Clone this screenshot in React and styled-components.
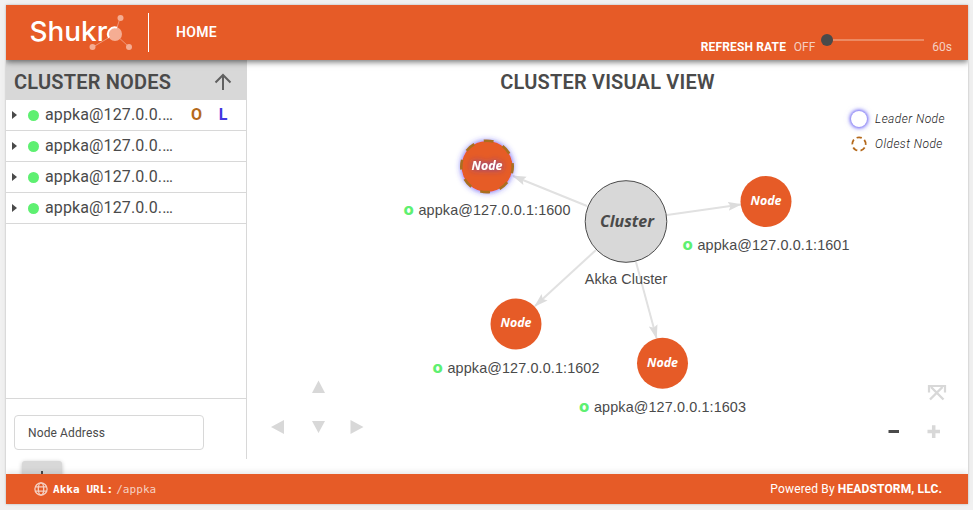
import React from "react";
import styled, { createGlobalStyle } from "styled-components";

const C = { orange: "#e65b27", dark: "#4a4a4a", light: "#d8d8d8", green: "#5ef071", brown: "#b4691b", blue: "#4338e0" };

const Global = createGlobalStyle`
  * { box-sizing: border-box; }
  body { margin: 0; background: #f1f1f1; font-family: Roboto, sans-serif; color: ${C.dark}; overflow: hidden; }
`;
const Page = styled.div`height: 510px; padding: 5px 5px 6px 6px;`;
const Shell = styled.div`
  height: 499px; display: flex; flex-direction: column; background: #fff;
  box-shadow: 0 0 2px rgba(0,0,0,.25), 0 0 8px rgba(0,0,0,.04); overflow: hidden;
`;
const Header = styled.header`
  height: 55px; flex: none; display: flex; align-items: flex-start; background: ${C.orange};
  color: #fff; position: relative; z-index: 1; box-shadow: 0 2px 6px rgba(0,0,0,.55);
`;
const Logo = styled.svg`width: 112px; height: 46px; margin: 5px 0 0 19px; display: block;`;
const Divider = styled.div`width: 1px; height: 39px; margin: 8px 0 0 11px; background: #fff;`;
const NavLink = styled.a`margin: 19px 0 0 27px; font-size: 14px; line-height: 16px; font-weight: 600; letter-spacing: .3px;`;
const Refresh = styled.div`margin: 27px 16px 0 auto; display: flex; font-size: 12px; line-height: 30px;`;
const RefreshTitle = styled.strong`font-weight: 700; width: 93px; letter-spacing: .15px;`;
const Faded = styled.span`color: #f5d0c2;`;
const Slider = styled.div`
  width: 104px; height: 12px; margin: 2px 7px 0 6px; display: flex; align-items: center;
`;
const Thumb = styled.div`width: 12px; height: 12px; border-radius: 50%; background: ${C.dark};`;
const Track = styled.div`flex: 1; height: 2px; background: #ec8a63; margin-right: 1px;`;

const Main = styled.main`height: 414px; flex: none; display: flex;`;
const Sidebar = styled.aside`
  width: 241px; height: 399px; border-right: 1px solid ${C.light}; display: flex; flex-direction: column;
`;
const SideTitle = styled.div`
  height: 40px; flex: none; background: ${C.light}; display: flex; align-items: center;
  justify-content: space-between; padding: 4px 14px 0 8px; font-size: 20px; font-weight: 600; letter-spacing: .2px;
`;
const NodeList = styled.div`height: 298px; flex: none;`;
const Row = styled.div`
  height: 31px; border-bottom: 1px solid ${C.light}; display: flex; align-items: center; font-size: 16px;
  padding: 0 0 1px 6px;
`;
const Caret = styled.div`
  border-left: 5px solid ${C.dark}; border-top: 4px solid transparent; border-bottom: 4px solid transparent;
`;
const Dot = styled.div`width: 11px; height: 11px; border-radius: 50%; background: ${C.green}; margin: 1px 6.5px 0 10.5px;`;
const Address = styled.span`
  width: 131px; flex: none; overflow: hidden; white-space: nowrap; text-overflow: ellipsis; letter-spacing: .12px;
`;
const Flag = styled.b`width: 12px; margin-left: 14.5px; text-align: center; color: ${(p) => p.$color}; font-weight: 700;`;
const AddForm = styled.form`border-top: 1px solid ${C.light}; height: 76px; flex: none; padding: 16px 8px 0;`;
const Input = styled.input`
  width: 190px; height: 35px; border: 1px solid ${C.light}; border-radius: 4px; padding: 0 13px; display: block;
  font: 12px Roboto, sans-serif; letter-spacing: .12px; &::placeholder { color: ${C.dark}; opacity: 1; }
`;
const AddButton = styled.button`
  margin: 11px 0 0 8px; width: 40px; height: 36px; border: 0; border-radius: 3px; padding: 0;
  background: ${C.light}; box-shadow: 0 1px 4px rgba(0,0,0,.25); display: flex; justify-content: center; padding-top: 10px;
`;
const AddIcon = styled.svg`width: 14px; height: 14px;`;

const View = styled.section`flex: 1; position: relative;`;
const ViewTitle = styled.h1`
  margin: 10px 0 0; text-align: center; font-size: 20px; line-height: 24px; font-weight: 600; letter-spacing: .2px;
`;
const Graph = styled.svg`position: absolute; left: 0; top: 0; width: 721px; height: 414px;`;
const Legend = styled.div`
  position: absolute; right: 23px; top: 46px; font-size: 12px; font-style: italic; font-weight: 300;
  letter-spacing: .45px; color: #222;
`;
const LegendItem = styled.div`height: 25px; display: flex; align-items: center; gap: 5px;`;
const LegendIcon = styled.svg`width: 22px; height: 22px; overflow: visible;`;
const LeaderRing = styled.circle`filter: drop-shadow(0 0 2px #4a40f0) drop-shadow(0 0 2px rgba(74,64,240,.5));`;

const Footer = styled.footer`
  height: 30px; flex: none; background: ${C.orange}; color: #fff; display: flex; align-items: center;
  padding: 0 26px 0 28px; font-size: 12px; position: relative; z-index: 1; box-shadow: 0 -2px 6px rgba(0,0,0,.1);
`;
const Globe = styled.svg`width: 14px; height: 14px; margin-right: 5px;`;
const Url = styled.div`flex: 1; font: 11px "DejaVu Sans Mono", monospace; display: flex; gap: 3px; letter-spacing: .06px;`;
const Credit = styled.span`letter-spacing: .14px;`;

const EDGES = [
  { x1: 340, y1: 146, x2: 266, y2: 116 },
  { x1: 420, y1: 155, x2: 494, y2: 144.5 },
  { x1: 349, y1: 190, x2: 288, y2: 246 },
  { x1: 389, y1: 202, x2: 409.5, y2: 278 },
];
const NODES = [
  { x: 240, y: 106.4, port: 1600, leader: true },
  { x: 519, y: 141.5, port: 1601 },
  { x: 269, y: 264, port: 1602 },
  { x: 415.5, y: 303.3, port: 1603 },
];

function ShukraLogo() {
  return (
    <Logo viewBox="25 10 112 46">
      <text x="29.5" y="41" fill="#fff" fontFamily="Inter, sans-serif" fontWeight="500" fontSize="27" textLength="78" lengthAdjust="spacingAndGlyphs">Shukr</text>
      <path d="M115 34L120 18M115 34L93 47M115 34L129 47" stroke="#f0977a" strokeWidth="1" />
      <g fill="#f5ad93">
        <circle cx="115" cy="34" r="7" /><circle cx="120.5" cy="18" r="3" />
        <circle cx="92.5" cy="47" r="3" /><circle cx="129" cy="47" r="3" />
      </g>
      <path d="M117 27.6a6.8 6.8 0 0 0-8 10" fill="none" stroke="#fff" strokeWidth="2" />
    </Logo>
  );
}

function ClusterGraph() {
  return (
    <Graph viewBox="0 0 721 414">
      <defs>
        <marker id="tip" markerUnits="userSpaceOnUse" markerWidth="15" markerHeight="10" refX="13" refY="4.5" orient="auto">
          <path d="M0 0L14 4.5L0 9L2.5 4.5Z" fill="#dcdcdc" />
        </marker>
        <filter id="glow" x="-50%" y="-50%" width="200%" height="200%">
          <feDropShadow dx="0" dy="0" stdDeviation="3.2" floodColor="#3a30f0" floodOpacity=".85" />
        </filter>
      </defs>
      {EDGES.map((e) => <line key={e.x2} {...e} stroke="#e1e1e1" strokeWidth="2" markerEnd="url(#tip)" />)}
      <circle cx="379" cy="161.5" r="40.8" fill={C.light} stroke={C.dark} />
      <text x="380" y="166.5" textAnchor="middle" fontFamily="Open Sans, sans-serif" fontStyle="italic" fontWeight="700" fontSize="16" textLength="54" lengthAdjust="spacingAndGlyphs" fill={C.dark}>Cluster</text>
      <text x="379" y="224" textAnchor="middle" fontFamily="Liberation Sans, sans-serif" fontSize="14.4" textLength="82.5" fill={C.dark}>Akka Cluster</text>
      {NODES.map((n) => (
        <g key={n.port}>
          <circle cx={n.x} cy={n.y} r="25.5" fill={C.orange} filter={n.leader ? "url(#glow)" : undefined} />
          {n.leader && <circle cx={n.x} cy={n.y} r="25.7" fill="none" stroke="#a96f20" strokeWidth="2.6" strokeDasharray="10 10" strokeDashoffset="3" />}
          <text x={n.x} y={n.y + 3.4} textAnchor="middle" fontFamily="Open Sans, sans-serif" fontStyle="italic" fontWeight="700" fontSize="12" textLength="31" lengthAdjust="spacingAndGlyphs" fill="#fff" filter={n.leader ? "url(#glow)" : undefined}>Node</text>
          <text x={n.x - 83.5} y={n.y + 48.7} fontFamily="DejaVu Sans, sans-serif" fontWeight="700" fontSize="15" fill={C.green}>o</text>
          <text x={n.x - 68.5} y={n.y + 48.5} fontFamily="Liberation Sans, sans-serif" fontSize="14.4" textLength="152" fill={C.dark}>{`appka@127.0.0.1:${n.port}`}</text>
        </g>
      ))}
      <path d="M71.5 320.5L78 333H65ZM71.5 373L65 361H78ZM24 367L37 360V374ZM116.5 367L103.5 360V374Z" fill={C.light} />
      <g fill="none" stroke={C.light} strokeWidth="2.4">
        <path d="M683 339.5L695.5 327M696.5 339.5L684 327" />
        <path d="M682 332.5V326H688M698 332.5V326H692M687 326H693" strokeWidth="2.2" />
        <path d="M680.5 371.5H693M686.7 365.2V378" strokeWidth="3.5" />
        <path d="M641.5 371.5H652" stroke={C.dark} strokeWidth="3" />
      </g>
    </Graph>
  );
}

export default function App() {
  return (
    <Page>
      <Global />
      <Shell>
        <Header>
          <ShukraLogo />
          <Divider />
          <NavLink>HOME</NavLink>
          <Refresh>
            <RefreshTitle>REFRESH RATE</RefreshTitle>
            <Faded>OFF</Faded>
            <Slider><Thumb /><Track /></Slider>
            <Faded>60s</Faded>
          </Refresh>
        </Header>
        <Main>
          <Sidebar>
            <SideTitle>
              CLUSTER NODES
              <svg width="18" height="18" viewBox="0 0 18 18" fill="none" stroke="#606060" strokeWidth="2"><path d="M9 17V2M1.5 9.5L9 2L16.5 9.5" /></svg>
            </SideTitle>
            <NodeList>
              {NODES.map((n) => (
                <Row key={n.port}>
                  <Caret /><Dot />
                  <Address>{`appka@127.0.0.1:${n.port}`}</Address>
                  {n.leader && <><Flag $color={C.brown}>O</Flag><Flag $color={C.blue}>L</Flag></>}
                </Row>
              ))}
            </NodeList>
            <AddForm>
              <Input placeholder="Node Address" />
              <AddButton type="button">
                <AddIcon viewBox="0 0 14 14" stroke={C.dark} strokeWidth="2"><path d="M7 0V14M0 7H14" /></AddIcon>
              </AddButton>
            </AddForm>
          </Sidebar>
          <View>
            <ViewTitle>CLUSTER VISUAL VIEW</ViewTitle>
            <ClusterGraph />
            <Legend>
              <LegendItem>
                <LegendIcon viewBox="0 0 22 22"><LeaderRing cx="11" cy="11" r="8" fill="#fff" /></LegendIcon>
                Leader Node
              </LegendItem>
              <LegendItem>
                <LegendIcon viewBox="0 0 22 22"><circle cx="11" cy="11" r="6.7" fill="none" stroke={C.brown} strokeWidth="1.8" strokeDasharray="5.2 3.22" transform="rotate(32 11 11)" /></LegendIcon>
                Oldest Node
              </LegendItem>
            </Legend>
          </View>
        </Main>
        <Footer>
          <Globe viewBox="0 0 14 14" fill="none" stroke="#f5d0c2" strokeWidth="1.3">
            <circle cx="7" cy="7" r="6.1" /><ellipse cx="7" cy="7" rx="2.7" ry="6.1" /><path d="M1.3 4.8H12.7M1.3 9.2H12.7" />
          </Globe>
          <Url><b>Akka URL:</b><Faded>/appka</Faded></Url>
          <Credit>Powered By <b>HEADSTORM, LLC.</b></Credit>
        </Footer>
      </Shell>
    </Page>
  );
}
